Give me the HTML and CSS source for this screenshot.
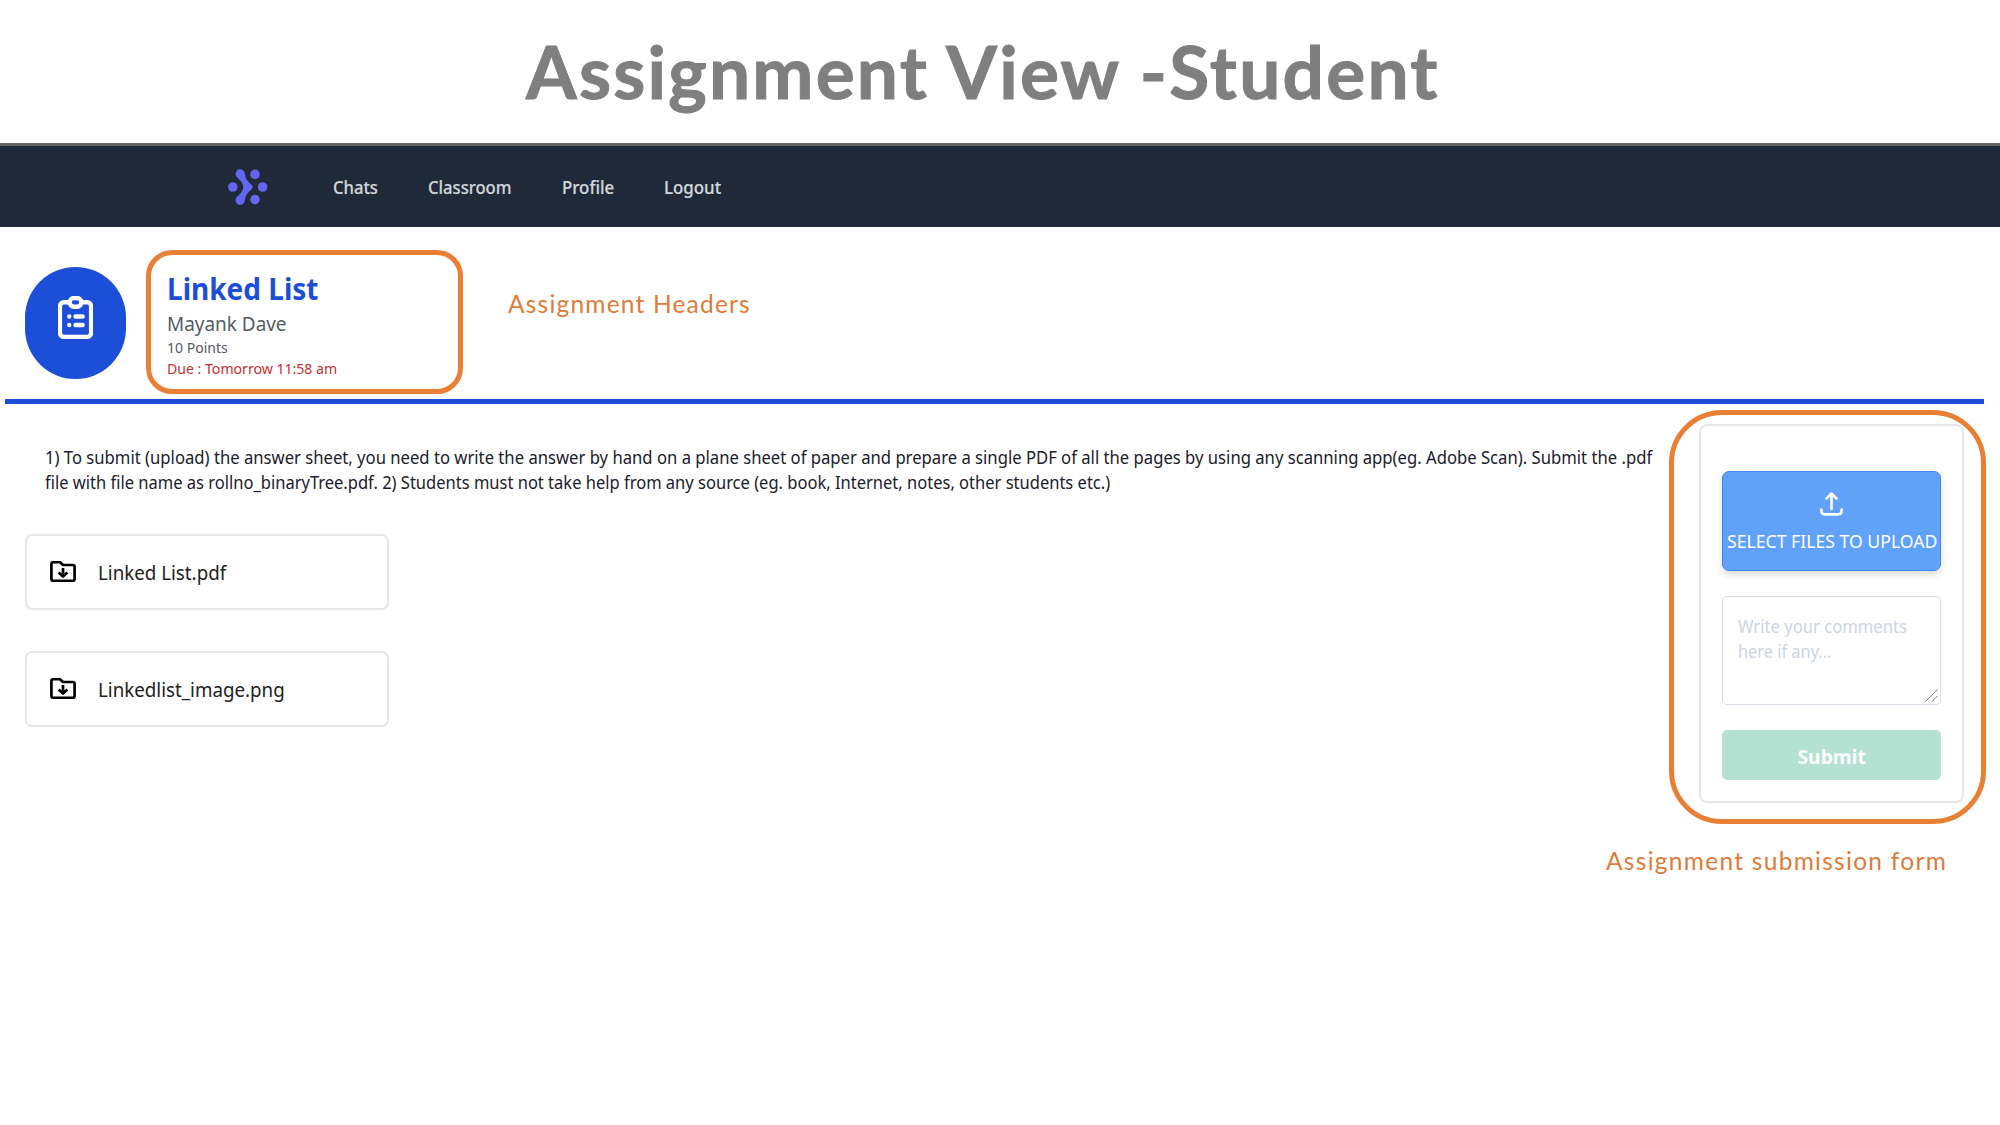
FILE: index.html
```html
<!DOCTYPE html>
<html lang="en">
<head>
<meta charset="utf-8">
<title>Assignment View - Student</title>
<link rel="stylesheet" href="styles.css">
</head>
<body>
<h1 class="slide-title">Assignment View -Student</h1>
<nav class="nav">
  <svg class="logo" viewBox="0 0 40 36" preserveAspectRatio="none">
    <circle cx="4.8" cy="18" r="4.8"/><circle cx="27" cy="5.4" r="4.8"/><circle cx="34.6" cy="18" r="4.8"/><circle cx="27" cy="30.6" r="4.8"/>
    <path d="M7.600 5.200C7.600 2.300 9.600.2 12.200.2C15 .2 16.800 2.300 17.100 5.500C17.500 9.500 19 11.300 23.200 15.400C25.200 17.300 25.200 18.700 23.200 20.600C19 24.700 17.500 26.500 17.100 30.500C16.800 33.700 15 35.800 12.200 35.800C9.600 35.800 7.600 33.700 7.600 30.800C7.600 26.500 15.200 25 15.200 18C15.200 11 7.600 9.500 7.600 5.200Z"/>
  </svg>
  <a><span class="t n1">Chats</span></a>
  <a><span class="t n2">Classroom</span></a>
  <a><span class="t n3">Profile</span></a>
  <a><span class="t n4">Logout</span></a>
</nav>
<header class="head">
  <div class="badge">
    <svg viewBox="3 1 18 21" preserveAspectRatio="none" fill="none" stroke="#fff" stroke-width="2.200" stroke-linecap="round" stroke-linejoin="round"><path d="M9 4H6a2 2 0 0 0-2 2v13a2 2 0 0 0 2 2h12a2 2 0 0 0 2-2V6a2 2 0 0 0-2-2h-3"/><rect x="9" y="2" width="6" height="4.200" rx="2.100"/><path d="M8.800 11h.01M12 11h3.700M8.800 15.200h.01M12 15.200h3.700"/></svg>
  </div>
  <div class="info">
    <h2><span class="t i1">Linked List</span></h2>
    <p class="teacher"><span class="t i2">Mayank Dave</span></p>
    <p class="points"><span class="t i3">10 Points</span></p>
    <p class="due"><span class="t i4">Due : Tomorrow 11:58 am</span></p>
    <div class="ring ring-head"></div>
  </div>
  <p class="note note-head">Assignment Headers</p>
</header>
<main class="body">
  <section class="work">
    <p class="brief"><span class="t b1">1) To submit (upload) the answer sheet, you need to write the answer by hand on a plane sheet of paper and prepare a single PDF of all the pages by using any scanning app(eg. Adobe Scan). Submit the .pdf</span><br><span class="t b2">file with file name as rollno_binaryTree.pdf. 2) Students must not take help from any source (eg. book, Internet, notes, other students etc.)</span></p>
    <div class="file">
      <svg viewBox="1 3 22 18" preserveAspectRatio="none" fill="none" stroke="#000" stroke-width="2.300" stroke-linejoin="round"><path d="M2.200 5.500Q2.200 4 3.700 4H9.500L12 6.400H20.300Q21.800 6.400 21.800 7.900V18.500Q21.800 20 20.300 20H3.700Q2.200 20 2.200 18.500Z"/><path d="M12 9v7M8.300 12.800l3.700 3.600 3.700-3.600"/></svg>
      <span class="t f1">Linked List.pdf</span>
    </div>
    <div class="file">
      <svg viewBox="1 3 22 18" preserveAspectRatio="none" fill="none" stroke="#000" stroke-width="2.300" stroke-linejoin="round"><path d="M2.200 5.500Q2.200 4 3.700 4H9.500L12 6.400H20.300Q21.800 6.400 21.800 7.900V18.500Q21.800 20 20.300 20H3.700Q2.200 20 2.200 18.500Z"/><path d="M12 9v7M8.300 12.800l3.700 3.600 3.700-3.600"/></svg>
      <span class="t f2">Linkedlist_image.png</span>
    </div>
  </section>
  <aside class="side">
    <form class="panel">
      <div class="upload">
        <svg viewBox="0 0 23 24" fill="none" stroke="#fff" stroke-width="2.600" stroke-linecap="round" stroke-linejoin="round"><path d="M11.500 17V2M6.500 6.500L11.500 1.500L16.500 6.500M1.400 17.500V18.500Q1.400 22.400 5 22.400H18Q21.600 22.400 21.600 18.500V17.500"/></svg>
        <span class="t u1">SELECT FILES TO UPLOAD</span>
      </div>
      <div class="comment">
        <span class="t c1">Write your comments</span><br><span class="t c2">here if any...</span>
        <svg class="grip" viewBox="0 0 13 13" stroke="#777" stroke-width="1"><path d="M.5 12.500L12.500.5M7 12.500L12.500 7"/></svg>
      </div>
      <div class="submit"><span class="t s1">Submit</span></div>
      <div class="ring ring-form"></div>
    </form>
    <p class="note note-form">Assignment submission form</p>
  </aside>
</main>
</body>
</html>
```
FILE: styles.css
```css
* { box-sizing: border-box; }
body { margin: 0; width: 2000px; height: 1125px; overflow: hidden; background: #fff; font-family: "Noto Sans", "Open Sans", sans-serif; color: #1a202c; }
h1, h2, p { margin: 0; }

.t { display: inline-block; white-space: nowrap; transform-origin: 0 50%; }
.n1, .n2 { transform: scaleX(.95); }
.n3, .n4 { transform: scaleX(.965); }
.i1 { transform: scaleX(.903); }
.i2, .i3 { transform: scaleX(.982); }
.i4 { transform: scaleX(.985); }
.b1 { transform: scaleX(.969); }
.b2 { transform: scaleX(.9605); }
.f1, .f2 { transform: scaleX(.961); }
.u1 { transform: scaleX(.98); }
.c1 { transform: scaleX(.95); }
.c2 { transform: scaleX(.935); }

.slide-title { height: 143px; padding-left: 526px; font: 700 73px/143px Lato, sans-serif; letter-spacing: 2.200px; color: #7f7f7f; white-space: nowrap; -webkit-text-stroke: 1px #7f7f7f; }
.nav { display: grid; grid-template-columns: 105px 95px 134px 102px 200px; align-items: center; height: 84px; padding-left: 227.500px; border-top: 3px solid #666; background: #1f2937; color: #d1d5db; font-size: 17.500px; font-weight: 500; line-height: 26px; -webkit-text-stroke: .2px #d1d5db; }
.logo { width: 40px; height: 36px; fill: #6366f1; }
.head { display: flex; align-items: flex-start; height: 177px; margin: 0 16px 0 5px; padding: 40px 0 0 19.500px; border-bottom: 5px solid #1d4ed8; }
.badge { display: flex; justify-content: center; width: 101.500px; height: 112px; padding-top: 29px; border-radius: 51px; background: #1d4ed8; }
.badge svg { width: 35px; height: 43px; }
.info { position: relative; width: 300px; margin-left: 40.500px; }
.info h2 { padding-top: 1px; font-size: 31px; line-height: 40px; color: #1d4ed8; }
.teacher { font-size: 19.300px; line-height: 31px; color: #555b64; }
.points { font-size: 14.300px; line-height: 18px; color: #555b64; }
.due { font-size: 14.300px; line-height: 24px; color: #c53030; }
.ring { position: absolute; border: 5px solid #e97e35; pointer-events: none; }
.ring-head { left: -20.500px; top: -17.500px; width: 317px; height: 144px; border-radius: 26px; }
.note { font: 400 24.500px/36px Lato, sans-serif; letter-spacing: 1.200px; color: #e07b39; white-space: nowrap; }
.note-head { margin: 18.500px 0 0 41.500px; }
.body { display: grid; grid-template-columns: 1699px 265px; }
.work { padding: 41px 0 0 24.500px; }
.brief { padding-left: 20.500px; margin-bottom: 38.500px; font-size: 17.200px; line-height: 25.200px; white-space: nowrap; }
.brief .t { height: 25.200px; vertical-align: top; }
.file { display: flex; align-items: center; width: 364px; height: 76px; margin-bottom: 41px; padding-left: 23px; border: 2px solid #e5e7eb; border-radius: 7px; font-size: 19.500px; line-height: 28px; color: #222; }
.file .t { padding-top: 2px; }
.file svg { width: 26px; height: 21px; margin-right: 22.500px; }
.panel { position: relative; display: flex; flex-direction: column; height: 379px; margin-top: 20px; padding: 45px 21px 0; border: 2px solid #e5e7eb; border-radius: 8px; }
.upload { display: flex; flex-direction: column; height: 100px; padding: 20px 0 0 3.500px; border: 1px solid #4387ee; border-radius: 7px; background: #60a2fa; color: #fff; font-size: 18px; line-height: 26px; box-shadow: 0 4px 7px rgba(0,0,0,.14); }
.upload svg { width: 23px; height: 24px; margin: 0 0 11.500px 93px; }
.comment { position: relative; height: 108.500px; margin-top: 25px; padding: 17px 15px; border: 1.500px solid #d5dde6; border-radius: 5px; color: #cbd5e1; font-size: 17.500px; line-height: 25.300px; white-space: nowrap; }
.comment .t { height: 25.300px; vertical-align: top; }
.grip { position: absolute; right: 2px; bottom: 2px; width: 13px; height: 13px; }
.submit { height: 50px; margin-top: 25.500px; padding-left: 75.500px; border-radius: 5px; background: #b4e1d2; color: #fff; font-size: 19.300px; font-weight: 700; line-height: 53.500px; }
.ring-form { left: -32px; top: -16px; width: 317px; height: 414px; border-radius: 53px; }
.note-form { margin: 39.500px 0 0 -93px; letter-spacing: 1.280px; }
```
